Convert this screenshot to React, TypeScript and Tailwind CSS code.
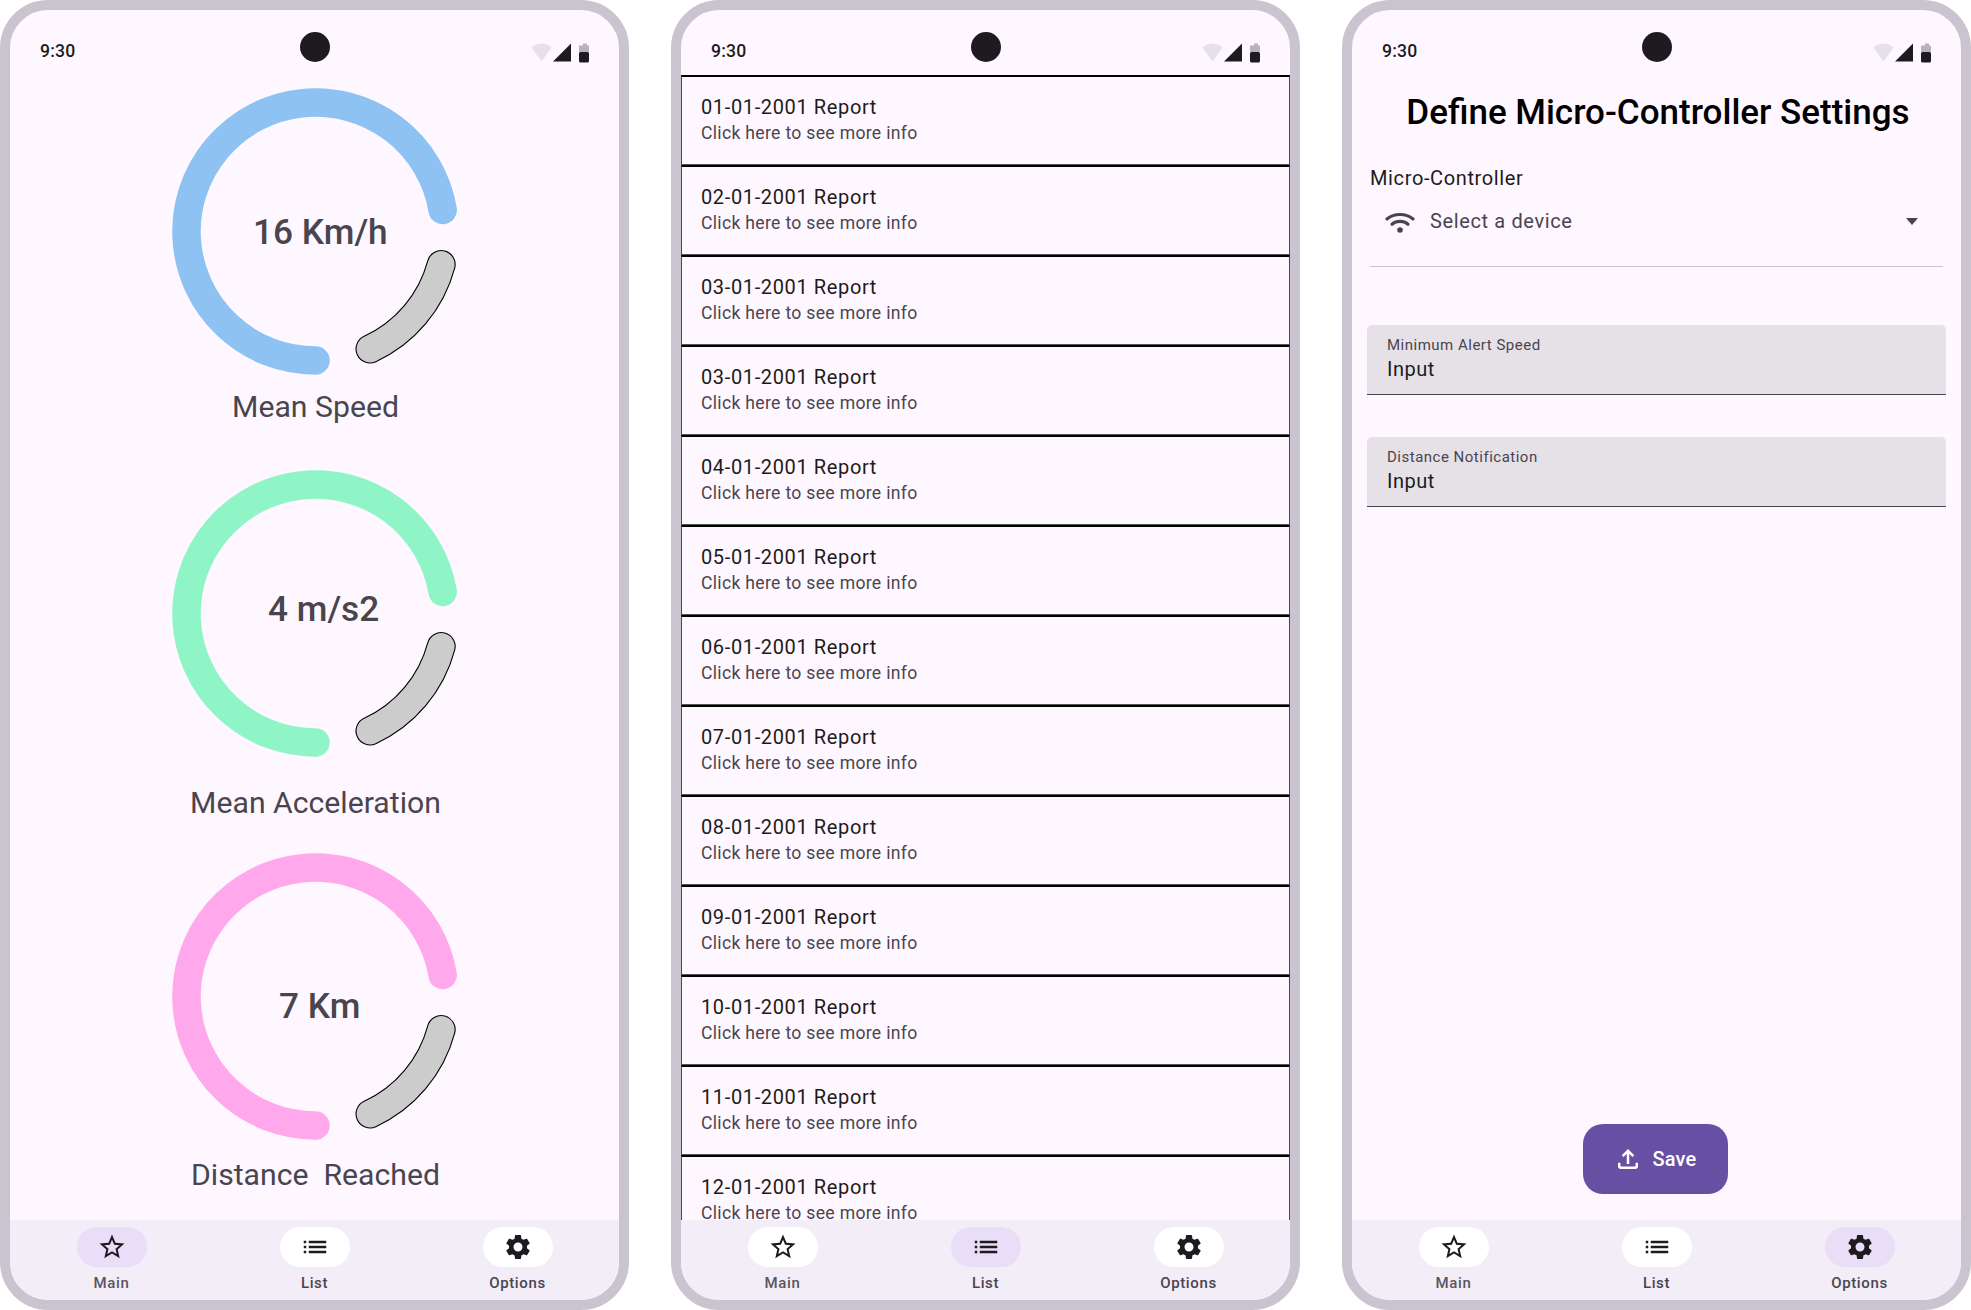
import React from "react";

const ink = "#1D1B20";

function Icon({ d, className }: { d: string; className?: string }) {
  return (
    <svg viewBox="0 0 24 24" className={className} fill="currentColor">
      <path d={d} />
    </svg>
  );
}

const STAR = "M22 9.24l-7.19-.62L12 2 9.19 8.63 2 9.24l5.46 4.73L5.82 21 12 17.27 18.18 21l-1.63-7.03L22 9.24zM12 15.4l-3.76 2.27 1-4.28-3.32-2.88 4.38-.38L12 6.1l1.71 4.04 4.38.38-3.32 2.88 1 4.28L12 15.4z";
const LIST = "M3 13h2v-2H3v2zm0 4h2v-2H3v2zm0-8h2V7H3v2zm4 4h14v-2H7v2zm0 4h14v-2H7v2zM7 7v2h14V7H7z";
const GEAR = "M19.14 12.94c.04-.3.06-.61.06-.94 0-.32-.02-.64-.07-.94l2.03-1.58c.18-.14.23-.41.12-.61l-1.92-3.32c-.12-.22-.37-.29-.59-.22l-2.39.96c-.5-.38-1.03-.7-1.62-.94l-.36-2.54c-.04-.24-.24-.41-.48-.41h-3.84c-.24 0-.43.17-.47.41l-.36 2.54c-.59.24-1.13.57-1.62.94l-2.39-.96c-.22-.08-.47 0-.59.22L2.74 8.87c-.12.21-.08.47.12.61l2.03 1.58c-.05.3-.09.63-.09.94s.02.64.07.94l-2.03 1.58c-.18.14-.23.41-.12.61l1.92 3.32c.12.22.37.29.59.22l2.39-.96c.5.38 1.03.7 1.62.94l.36 2.54c.05.24.24.41.48.41h3.84c.24 0 .44-.17.47-.41l.36-2.54c.59-.24 1.13-.56 1.62-.94l2.39.96c.22.08.47 0 .59-.22l1.92-3.32c.12-.22.07-.47-.12-.61l-2.01-1.58zM12 15.6c-1.98 0-3.6-1.62-3.6-3.6s1.62-3.6 3.6-3.6 3.6 1.62 3.6 3.6-1.62 3.6-3.6 3.6z";
const UPLOAD = "M18 15v3H6v-3H4v3c0 1.1.9 2 2 2h12c1.1 0 2-.9 2-2v-3h-2zM7 9l1.41 1.41L11 7.83V16h2V7.83l2.59 2.58L17 9l-5-5-5 5z";

function StatusBar() {
  return (
    <div className="relative h-[65px] shrink-0 pl-[30px] pr-[29px] flex items-start justify-between">
      <span className="mt-[30px] text-[17.6px] leading-[22px] font-medium tracking-[0.18px] text-[#1D1B20]">9:30</span>
      <div className="absolute left-1/2 top-[22px] -ml-[15px] w-[30px] h-[30px] rounded-full bg-[#1D1B20]" />
      <svg viewBox="0 0 60 22" className="mt-[31.5px] w-[60px] h-[22px]">
        <path d="M1.5 5.5C4.5 2.5 8 1.5 11.5 1.5s7 1 10 4L11.5 19.5z" fill="#E6E0E9" />
        <path d="M41 1.5V19.5H23z" fill="#1D1B20" />
        <path d="M51 3.5h2v-2h4v2h2v6.5H49V3.5z" fill="#B8B2BC" />
        <rect x="49" y="10" width="10" height="10.5" rx="1.5" fill="#1D1B20" />
      </svg>
    </div>
  );
}

function NavBar({ active }: { active: number }) {
  const items = [
    { label: "Main", d: STAR, text: "text-[#5A5561]" },
    { label: "List", d: LIST, text: "text-[#49454F]" },
    { label: "Options", d: GEAR, text: "text-[#49454F]" },
  ];
  return (
    <div className="h-[80px] shrink-0 bg-[#F3EDF7] grid grid-cols-3 pt-[7px]">
      {items.map((it, i) => (
        <div key={it.label} className="flex flex-col items-center">
          <div className={"w-[70px] h-[40px] rounded-[20px] flex items-center justify-center " + (i === active ? "bg-[#E8DEF8]" : "bg-white")}>
            <Icon d={it.d} className="w-[30px] h-[30px] text-[#1D1B20]" />
          </div>
          <span className={"mt-[6px] text-[15px] leading-[20px] font-medium tracking-[0.63px] " + it.text}>{it.label}</span>
        </div>
      ))}
    </div>
  );
}

function Phone({ children, active }: { children: React.ReactNode; active: number }) {
  return (
    <div className="w-[629px] h-[1310px] shrink-0 rounded-[48px] border-[10px] border-[#CAC4D0] bg-[#FEF7FF] flex flex-col overflow-hidden">
      <StatusBar />
      <div className="flex-1 min-h-0 overflow-hidden flex flex-col">{children}</div>
      <NavBar active={active} />
    </div>
  );
}

function Gauge({ color, value, valueClass, label, className, labelClass }: { color: string; value: string; valueClass: string; label: string; className: string; labelClass: string }) {
  const gray = "M125.7 33A130 130 0 0 1 54.5 117.5";
  return (
    <div className={"ml-[2px] flex flex-col items-center " + className}>
      <div className="relative w-[287px] h-[287px]">
        <svg viewBox="-143.5 -143.5 287 287" className="w-[287px] h-[287px] overflow-visible">
          <path d="M0 129A129 129 0 1 1 127.2 -21.5" fill="none" stroke={color} strokeWidth="28.5" strokeLinecap="round" />
          <path d={gray} fill="none" stroke="#000000" strokeWidth="29" strokeLinecap="round" />
          <path d={gray} fill="none" stroke="#CCCCCC" strokeWidth="26.8" strokeLinecap="round" />
        </svg>
        <span className={"absolute whitespace-nowrap text-[35.2px] leading-[44px] font-medium text-[#49454F] " + valueClass}>{value}</span>
      </div>
      <span className={"text-[30.2px] leading-[40px] whitespace-pre text-[#49454F] " + labelClass}>{label}</span>
    </div>
  );
}

function ReportRow({ date }: { date: string }) {
  return (
    <div className="h-[90px] shrink-0 border-x border-b border-x-[#4A4A4A] border-b-[#555555] border-t-[2px] border-t-black pl-[19px] pt-[16px]">
      <div className="text-[20px] leading-[28px] tracking-[0.63px] text-[#1D1B20]">{date} Report</div>
      <div className="text-[17.6px] leading-[24px] tracking-[0.31px] text-[#49454F]">Click here to see more info</div>
    </div>
  );
}

function Field({ label, className }: { label: string; className: string }) {
  return (
    <div className={"h-[70px] mx-[-3px] rounded-t-[5px] bg-[#E6E1E7] border-b-[1.5px] border-[#49454F] pl-[20px] pt-[10px] " + className}>
      <div className="text-[15px] leading-[20px] tracking-[0.5px] text-[#49454F]">{label}</div>
      <div className="text-[20px] leading-[28px] tracking-[0.5px] text-[#1D1B20]">Input</div>
    </div>
  );
}

export default function App() {
  const dates = ["01", "02", "03", "03", "04", "05", "06", "07", "08", "09", "10", "11", "12"];
  return (
    <div className="w-[1971px] h-[1310px] bg-white flex justify-between overflow-hidden" style={{ fontFamily: "Roboto, sans-serif", color: ink }}>
      <Phone active={0}>
        <Gauge color="#8DC2F3" value="16 Km/h" valueClass="left-[81px] top-[122px]" label="Mean Speed" className="mt-[13px]" labelClass="mt-[12px]" />
        <Gauge color="#8FF5C6" value="4 m/s2" valueClass="left-[96px] top-[117px]" label="Mean Acceleration" className="mt-[43px]" labelClass="mt-[26px]" />
        <Gauge color="#FFA8EC" value="7 Km" valueClass="left-[107px] top-[131px]" label="Distance  Reached" className="mt-[30px]" labelClass="mt-[15px]" />
      </Phone>
      <Phone active={1}>
        {dates.map((m, i) => (
          <ReportRow key={i} date={`${m}-01-2001`} />
        ))}
      </Phone>
      <Phone active={2}>
        <div className="flex-1 flex flex-col px-[18px]">
          <h1 className="mt-[16px] pl-[3px] text-center text-[35px] leading-[44px] font-medium text-black whitespace-nowrap">Define Micro-Controller Settings</h1>
          <div className="mt-[29px] text-[20px] leading-[28px] tracking-[0.63px] text-[#1D1B20]">Micro-Controller</div>
          <div className="mt-[18px] h-[57px] border-b-[1.5px] border-[#CAC4D0] flex items-start pl-[15px] pr-[25px]">
            <svg viewBox="0 0 30 22" className="w-[30px] h-[22px] mt-[1px] text-[#49454F]" fill="none" stroke="currentColor" strokeWidth="3.2" strokeLinecap="round">
              <path d="M2 8C9 2 21 2 28 8" />
              <path d="M7 13.2C11.5 9.5 18.5 9.5 23 13.2" />
              <circle cx="15" cy="19" r="2.8" fill="currentColor" stroke="none" />
            </svg>
            <span className="ml-[15px] -mt-[1px] text-[20px] leading-[24px] tracking-[0.63px] text-[#49454F]">Select a device</span>
            <span className="ml-auto mt-[8px] w-0 h-0 border-x-[6px] border-x-transparent border-t-[7px] border-t-[#49454F]" />
          </div>
          <Field label="Minimum Alert Speed" className="mt-[58px]" />
          <Field label="Distance Notification" className="mt-[42px]" />
          <button className="mt-auto mb-[26px] mr-[3px] self-center h-[70px] w-[145px] rounded-[20px] bg-[#6750A4] text-white flex items-center pl-[30px]">
            <Icon d={UPLOAD} className="w-[30px] h-[30px]" />
            <span className="ml-[10px] text-[20px] font-medium tracking-[0.13px]">Save</span>
          </button>
        </div>
      </Phone>
    </div>
  );
}
